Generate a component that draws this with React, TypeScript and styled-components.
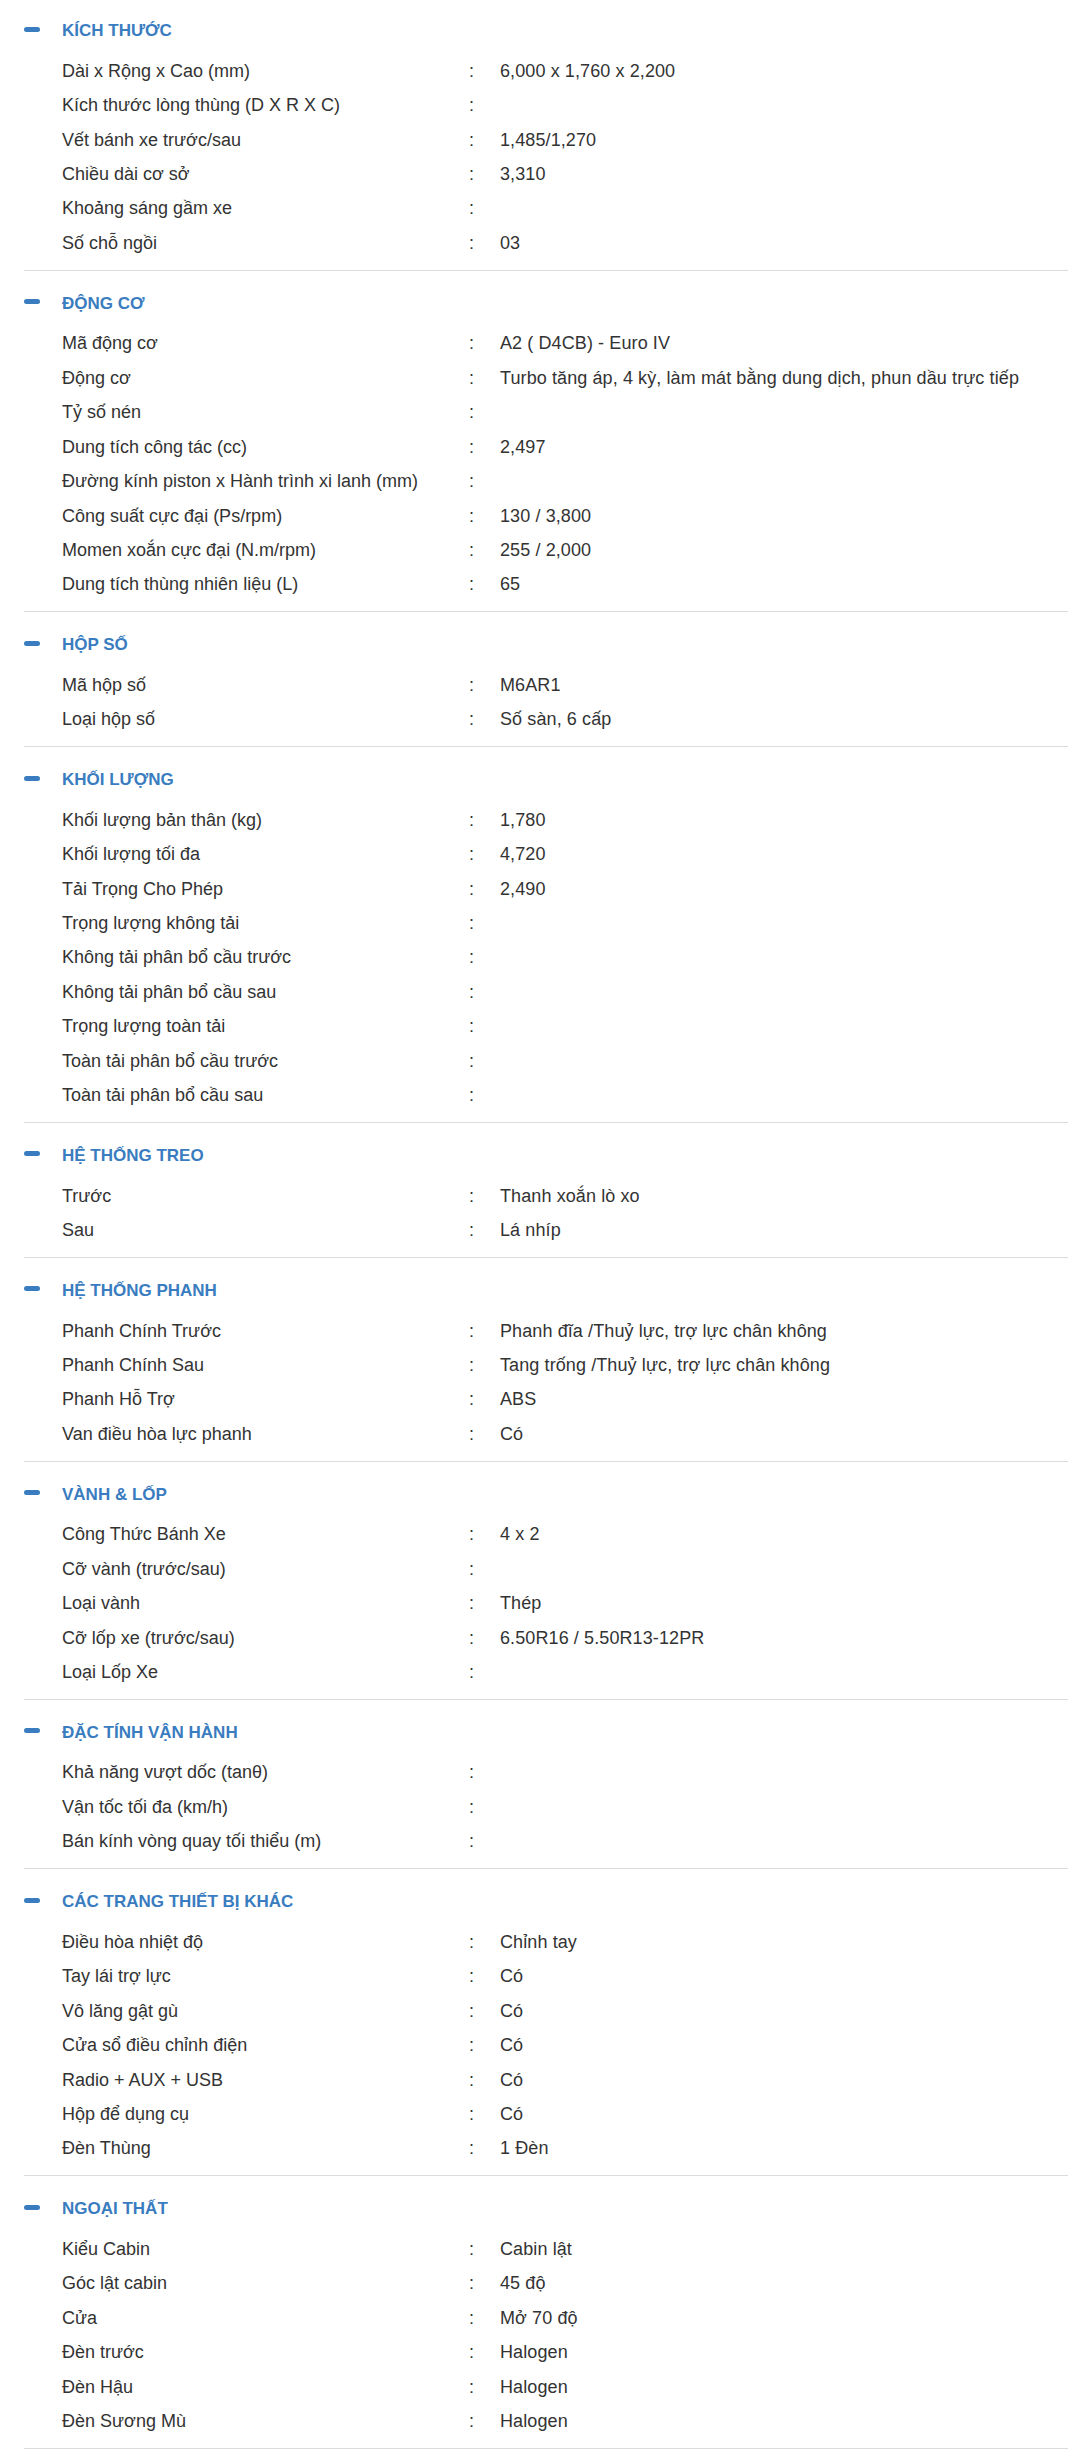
import React from "react";
import styled, { createGlobalStyle } from "styled-components";

const GlobalStyle = createGlobalStyle`
  html, body { margin: 0; padding: 0; background: #ffffff; }
  body { font-family: "Liberation Sans", Arial, sans-serif; color: #333333; }
`;

type Spec = [string, string];
type Group = { title: string; rows: Spec[] };

const groups: Group[] = [
  {
    title: "KÍCH THƯỚC",
    rows: [
      ["Dài x Rộng x Cao (mm)", "6,000 x 1,760 x 2,200"],
      ["Kích thước lòng thùng (D X R X C)", ""],
      ["Vết bánh xe trước/sau", "1,485/1,270"],
      ["Chiều dài cơ sở", "3,310"],
      ["Khoảng sáng gầm xe", ""],
      ["Số chỗ ngồi", "03"],
    ],
  },
  {
    title: "ĐỘNG CƠ",
    rows: [
      ["Mã động cơ", "A2 ( D4CB) - Euro IV"],
      ["Động cơ", "Turbo tăng áp, 4 kỳ, làm mát bằng dung dịch, phun dầu trực tiếp"],
      ["Tỷ số nén", ""],
      ["Dung tích công tác (cc)", "2,497"],
      ["Đường kính piston x Hành trình xi lanh (mm)", ""],
      ["Công suất cực đại (Ps/rpm)", "130 / 3,800"],
      ["Momen xoắn cực đại (N.m/rpm)", "255 / 2,000"],
      ["Dung tích thùng nhiên liệu (L)", "65"],
    ],
  },
  {
    title: "HỘP SỐ",
    rows: [
      ["Mã hộp số", "M6AR1"],
      ["Loại hộp số", "Số sàn, 6 cấp"],
    ],
  },
  {
    title: "KHỐI LƯỢNG",
    rows: [
      ["Khối lượng bản thân (kg)", "1,780"],
      ["Khối lượng tối đa", "4,720"],
      ["Tải Trọng Cho Phép", "2,490"],
      ["Trọng lượng không tải", ""],
      ["Không tải phân bổ cầu trước", ""],
      ["Không tải phân bổ cầu sau", ""],
      ["Trọng lượng toàn tải", ""],
      ["Toàn tải phân bổ cầu trước", ""],
      ["Toàn tải phân bổ cầu sau", ""],
    ],
  },
  {
    title: "HỆ THỐNG TREO",
    rows: [
      ["Trước", "Thanh xoắn lò xo"],
      ["Sau", "Lá nhíp"],
    ],
  },
  {
    title: "HỆ THỐNG PHANH",
    rows: [
      ["Phanh Chính Trước", "Phanh đĩa /Thuỷ lực, trợ lực chân không"],
      ["Phanh Chính Sau", "Tang trống /Thuỷ lực, trợ lực chân không"],
      ["Phanh Hỗ Trợ", "ABS"],
      ["Van điều hòa lực phanh", "Có"],
    ],
  },
  {
    title: "VÀNH & LỐP",
    rows: [
      ["Công Thức Bánh Xe", "4 x 2"],
      ["Cỡ vành (trước/sau)", ""],
      ["Loại vành", "Thép"],
      ["Cỡ lốp xe (trước/sau)", "6.50R16 / 5.50R13-12PR"],
      ["Loại Lốp Xe", ""],
    ],
  },
  {
    title: "ĐẶC TÍNH VẬN HÀNH",
    rows: [
      ["Khả năng vượt dốc (tanθ)", ""],
      ["Vận tốc tối đa (km/h)", ""],
      ["Bán kính vòng quay tối thiểu (m)", ""],
    ],
  },
  {
    title: "CÁC TRANG THIẾT BỊ KHÁC",
    rows: [
      ["Điều hòa nhiệt độ", "Chỉnh tay"],
      ["Tay lái trợ lực", "Có"],
      ["Vô lăng gật gù", "Có"],
      ["Cửa sổ điều chỉnh điện", "Có"],
      ["Radio + AUX + USB", "Có"],
      ["Hộp để dụng cụ", "Có"],
      ["Đèn Thùng", "1 Đèn"],
    ],
  },
  {
    title: "NGOẠI THẤT",
    rows: [
      ["Kiểu Cabin", "Cabin lật"],
      ["Góc lật cabin", "45 độ"],
      ["Cửa", "Mở 70 độ"],
      ["Đèn trước", "Halogen"],
      ["Đèn Hậu", "Halogen"],
      ["Đèn Sương Mù", "Halogen"],
    ],
  },
];

const Page = styled.div`
  padding: 0 0 0 24px;
`;

const Section = styled.section`
  padding: 15px 0 9px;
  border-bottom: 1px solid #dcdcdc;

  &:first-child {
    padding-top: 13px;
  }
`;

const Header = styled.div`
  display: flex;
  align-items: center;
  height: 36px;
`;

const Minus = styled.span`
  display: block;
  width: 16px;
  height: 5px;
  border-radius: 3px;
  background: #3a7cc0;
  margin: 0 22px 4px 0;
`;

const Title = styled.h3`
  margin: 0;
  font-family: "Liberation Sans", Arial, sans-serif;
  font-size: 17px;
  font-weight: 700;
  color: #3a7cc0;
`;

const Rows = styled.div`
  margin-top: 5px;
  display: flex;
  flex-direction: column;
`;

const Row = styled.div`
  display: grid;
  grid-template-columns: 407px 31px 1fr;
  align-items: center;
  height: 34.45px;
  padding-left: 38px;
  font-size: 18px;
  color: #333333;
`;

const Label = styled.span`
  white-space: nowrap;
`;

const Colon = styled.span``;

const Value = styled.span`
  white-space: nowrap;
  letter-spacing: 0.1px;
`;

export default function App() {
  return (
    <>
      <GlobalStyle />
      <Page>
        {groups.map((g) => (
          <Section key={g.title}>
            <Header>
              <Minus />
              <Title>{g.title}</Title>
            </Header>
            <Rows>
              {g.rows.map(([label, value]) => (
                <Row key={label}>
                  <Label>{label}</Label>
                  <Colon>:</Colon>
                  <Value>{value}</Value>
                </Row>
              ))}
            </Rows>
          </Section>
        ))}
      </Page>
    </>
  );
}
